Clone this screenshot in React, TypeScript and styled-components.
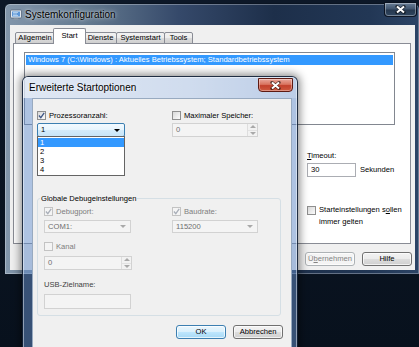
import React from 'react';
import styled, { createGlobalStyle } from 'styled-components';

const GlobalStyle = createGlobalStyle`
  html, body {
    margin: 0;
    padding: 0;
    background: #0b1522;
  }
  body {
    font-family: 'Liberation Sans', Arial, sans-serif;
  }
`;

const Desktop = styled.div`
  position: relative;
  width: 419px;
  height: 347px;
  overflow: hidden;
  background: linear-gradient(180deg, #0d1828 0%, #08111d 100%);
  font-size: 7.6px;
  line-height: 1;
  color: #000;
`;

/* ---------- window chrome ---------- */

const MainWindow = styled.div`
  position: absolute;
  left: 4px;
  top: 3px;
  width: 416px;
  height: 272px;
  box-sizing: border-box;
  display: flex;
  flex-direction: column;
  border: 1px solid #0a1422;
  border-radius: 6px 6px 0 0;
  background: linear-gradient(
    90deg,
    #8296ab 0%,
    #63798f 20%,
    #35496a 42%,
    #1d2f4a 65%,
    #223755 88%,
    #2c4466 100%
  );
  box-shadow: inset 0 0 0 1px rgba(255, 255, 255, 0.3);
`;

const Dialog = styled.div`
  position: absolute;
  left: 22px;
  top: 76px;
  width: 276px;
  height: 290px;
  box-sizing: border-box;
  display: flex;
  flex-direction: column;
  border: 1px solid rgba(8, 20, 40, 0.85);
  border-radius: 6px 6px 0 0;
  background: rgba(100, 140, 200, 0.52);
  box-shadow: 0 0 9px 2px rgba(0, 0, 0, 0.45),
    inset 0 0 0 1px rgba(255, 255, 255, 0.45);
`;

const TitleBar = styled.div<{ $glass?: boolean }>`
  position: relative;
  flex: none;
  height: 21px;
  display: flex;
  align-items: center;
  gap: 3px;
  padding-left: ${({ $glass }) => ($glass ? '6px' : '5px')};
  border-radius: 5px 5px 0 0;
  background: ${({ $glass }) =>
    $glass
      ? 'linear-gradient(90deg, rgba(255,255,255,0.62) 0%, rgba(255,255,255,0.42) 60%, rgba(255,255,255,0.18) 100%)'
      : 'none'};
`;

const TitleText = styled.span<{ $size: number }>`
  font-size: ${({ $size }) => $size}px;
  color: #000;
  text-shadow: 0 0 5px rgba(255, 255, 255, 0.75), 0 0 2px rgba(255, 255, 255, 0.5);
  white-space: nowrap;
`;

const CloseButton = styled.div<{ $red?: boolean }>`
  position: absolute;
  top: ${({ $red }) => ($red ? '1px' : '-2px')};
  right: ${({ $red }) => ($red ? '4px' : '2px')};
  width: ${({ $red }) => ($red ? '35px' : '33px')};
  height: ${({ $red }) => ($red ? '14px' : '15px')};
  box-sizing: border-box;
  display: flex;
  align-items: center;
  justify-content: center;
  border-radius: 0 0 4px 4px;
  border: 1px solid ${({ $red }) => ($red ? '#5e1a12' : 'rgba(5, 12, 25, 0.9)')};
  background: ${({ $red }) =>
    $red
      ? 'linear-gradient(180deg, #e9a79c 0%, #d9735f 45%, #c2402c 55%, #cf5a40 100%)'
      : 'linear-gradient(180deg, #6a7f98 0%, #40556f 45%, #26384f 55%, #304660 100%)'};
  box-shadow: inset 0 0 0 1px rgba(255, 255, 255, 0.35);
`;

const CloseGlyph = () => (
  <svg width="11" height="9" viewBox="0 0 11 9">
    <path
      d="M2 1.5 L9 7.5 M9 1.5 L2 7.5"
      stroke="rgba(0,0,0,0.55)"
      strokeWidth="3.4"
      strokeLinecap="round"
      fill="none"
    />
    <path d="M2 1.5 L9 7.5 M9 1.5 L2 7.5" stroke="#fff" strokeWidth="2" fill="none" />
  </svg>
);

const AppIcon = () => (
  <svg width="12" height="12" viewBox="0 0 12 12">
    <rect x="0.5" y="1" width="11" height="8" rx="1" fill="#e3e9f0" stroke="#56657a" strokeWidth="0.8" />
    <rect x="2" y="2.5" width="8" height="5" fill="#5d97d8" />
    <path d="M3 3.5h5M3 5h4M3 6.5h5" stroke="#e8f2fc" strokeWidth="0.6" />
    <path d="M4 9.3h4l.8 1.8H3.2z" fill="#8a97a6" />
  </svg>
);

/* ---------- main window content ---------- */

const MainClient = styled.div`
  flex: 1;
  margin: 0 4px 4px 5px;
  display: flex;
  flex-direction: column;
  background: #f0f0f0;
`;

const TabStrip = styled.div`
  display: flex;
  align-items: flex-end;
  height: 15px;
  margin-top: 4px;
  padding-left: 5px;
`;

const Tab = styled.div<{ $width: number; $active?: boolean }>`
  position: relative;
  z-index: ${({ $active }) => ($active ? 1 : 0)};
  width: ${({ $width }) => $width}px;
  height: ${({ $active }) => ($active ? '16px' : '12px')};
  margin: ${({ $active }) => ($active ? '0 -2px 0 -1px' : '0 -1px 0 0')};
  box-sizing: border-box;
  display: flex;
  align-items: center;
  justify-content: center;
  padding-bottom: ${({ $active }) => ($active ? '2px' : '0')};
  border: 1px solid #898c95;
  border-bottom: ${({ $active }) => ($active ? 'none' : '1px solid #898c95')};
  border-radius: 2px 2px 0 0;
  background: ${({ $active }) =>
    $active ? '#ffffff' : 'linear-gradient(180deg, #f2f2f2 0%, #ebebeb 50%, #dddddd 51%, #cfcfcf 100%)'};
  white-space: nowrap;
`;

const TabPanel = styled.div`
  height: 201px;
  box-sizing: border-box;
  margin: -1px 4px 0 3px;
  padding: 8px 0 0 10px;
  border: 1px solid #898c95;
  background: #ffffff;
`;

const ListBox = styled.div`
  width: 371px;
  height: 73px;
  box-sizing: border-box;
  padding: 2px 1px;
  border: 1px solid #828790;
  background: #ffffff;
`;

const ListRow = styled.div<{ $selected?: boolean }>`
  height: 10px;
  line-height: 10px;
  padding-left: 2px;
  white-space: nowrap;
  color: ${({ $selected }) => ($selected ? '#ffffff' : '#000000')};
  background: ${({ $selected }) => ($selected ? '#3399ff' : 'transparent')};
`;

const PanelLower = styled.div`
  display: grid;
  grid-template-columns: 283px auto;
  margin-top: 26px;
`;

const SideColumn = styled.div`
  display: flex;
  flex-direction: column;
`;

const FieldLabel = styled.div<{ $muted?: boolean }>`
  height: 9px;
  line-height: 9px;
  color: ${({ $muted }) => ($muted ? '#404040' : '#000')};
  white-space: nowrap;
`;

const InlineRow = styled.div<{ $top: number }>`
  display: flex;
  align-items: center;
  gap: 4px;
  margin-top: ${({ $top }) => $top}px;
`;

const WrapCheck = styled.div`
  display: flex;
  align-items: flex-start;
  gap: 3px;
  margin-top: 29px;
`;

const WrapText = styled.div`
  line-height: 12px;
  margin-top: -2px;
`;

const ButtonRow = styled.div<{ $top: number; $right: number }>`
  display: flex;
  justify-content: flex-end;
  gap: 7px;
  margin-top: ${({ $top }) => $top}px;
  padding-right: ${({ $right }) => $right}px;
`;

const Button = styled.div<{ $kind?: 'default' | 'disabled' }>`
  width: 50px;
  height: 14px;
  box-sizing: border-box;
  display: flex;
  align-items: center;
  justify-content: center;
  border-radius: 3px;
  border: 1px solid
    ${({ $kind }) => ($kind === 'default' ? '#3c7fb1' : $kind === 'disabled' ? '#adb2b5' : '#707070')};
  color: ${({ $kind }) => ($kind === 'disabled' ? '#838383' : '#000')};
  background: ${({ $kind }) =>
    $kind === 'default'
      ? 'linear-gradient(180deg, #eaf6fd 0%, #d9f0fc 50%, #bee6fd 51%, #a7d9f5 100%)'
      : $kind === 'disabled'
      ? '#f4f4f4'
      : 'linear-gradient(180deg, #f2f2f2 0%, #ebebeb 50%, #dddddd 51%, #cfcfcf 100%)'};
  box-shadow: inset 0 0 0 1px rgba(255, 255, 255, 0.7);
`;

/* ---------- form controls ---------- */

const CheckLabel = styled.div<{ $disabled?: boolean }>`
  display: flex;
  align-items: center;
  gap: 3px;
  height: 9px;
  white-space: nowrap;
  color: ${({ $disabled }) => ($disabled ? '#7d7d7d' : '#000')};
`;

const Box = styled.span<{ $disabled?: boolean }>`
  flex: none;
  width: 9px;
  height: 9px;
  box-sizing: border-box;
  display: inline-flex;
  align-items: center;
  justify-content: center;
  border: 1px solid ${({ $disabled }) => ($disabled ? '#c3c3c3' : '#8f8f8f')};
  background: ${({ $disabled }) =>
    $disabled ? '#f4f4f4' : 'linear-gradient(135deg, #d8d8d8 0%, #fbfbfb 100%)'};
`;

const CheckBox = ({ checked, disabled }: { checked?: boolean; disabled?: boolean }) => (
  <Box $disabled={disabled}>
    {checked && (
      <svg width="7" height="7" viewBox="0 0 7 7">
        <path
          d="M0.9 3.5 L2.8 5.6 L6.2 0.9"
          fill="none"
          stroke={disabled ? '#a8aeb8' : '#3d5585'}
          strokeWidth="1.3"
        />
      </svg>
    )}
  </Box>
);

const Field = styled.div<{ $w: number; $h: number; $disabled?: boolean; $hot?: boolean }>`
  position: relative;
  width: ${({ $w }) => $w}px;
  height: ${({ $h }) => $h}px;
  box-sizing: border-box;
  display: flex;
  align-items: center;
  padding-left: 3px;
  border: 1px solid
    ${({ $disabled, $hot }) => ($hot ? '#3c7fb1' : $disabled ? '#d2d2d2' : '#abadb3')};
  border-radius: ${({ $hot }) => ($hot ? '2px' : '0')};
  color: ${({ $disabled }) => ($disabled ? '#6d6d6d' : '#000')};
  background: ${({ $disabled, $hot }) =>
    $hot
      ? 'linear-gradient(180deg, #f3faff 0%, #e6f4fd 50%, #d4ecfb 51%, #c8e5f8 100%)'
      : $disabled
      ? '#f4f4f4'
      : '#ffffff'};
`;

const Arrow = styled.span<{ $disabled?: boolean; $up?: boolean }>`
  width: 0;
  height: 0;
  border-left: 3px solid transparent;
  border-right: 3px solid transparent;
  border-top: ${({ $up, $disabled }) => ($up ? 'none' : `3px solid ${$disabled ? '#a9a9a9' : '#000'}`)};
  border-bottom: ${({ $up, $disabled }) => ($up ? `3px solid ${$disabled ? '#a9a9a9' : '#000'}` : 'none')};
`;

const ComboArrow = styled.span`
  margin-left: auto;
  margin-right: 4px;
  display: flex;
`;

const SpinButtons = styled.span`
  margin-left: auto;
  width: 10px;
  height: 100%;
  box-sizing: border-box;
  display: flex;
  flex-direction: column;
  border-left: 1px solid #dedede;
`;

const SpinHalf = styled.span`
  flex: 1;
  display: flex;
  align-items: center;
  justify-content: center;
  background: #f2f2f2;
  & + & {
    border-top: 1px solid #e2e2e2;
  }
`;

const DropList = styled.div`
  position: absolute;
  left: -1px;
  top: 100%;
  width: 88px;
  box-sizing: border-box;
  padding: 1px 0;
  border: 1px solid #646464;
  background: #ffffff;
  z-index: 2;
`;

const DropItem = styled.div<{ $selected?: boolean }>`
  height: 9px;
  line-height: 9px;
  padding-left: 2px;
  color: ${({ $selected }) => ($selected ? '#fff' : '#000')};
  background: ${({ $selected }) => ($selected ? '#3399ff' : 'transparent')};
`;

const Spinner = ({ w, h, value }: { w: number; h: number; value: string }) => (
  <Field $w={w} $h={h} $disabled>
    {value}
    <SpinButtons>
      <SpinHalf>
        <Arrow $up $disabled />
      </SpinHalf>
      <SpinHalf>
        <Arrow $disabled />
      </SpinHalf>
    </SpinButtons>
  </Field>
);

/* ---------- dialog content ---------- */

const DialogClient = styled.div`
  flex: 1;
  position: relative;
  margin: 0 5px 0 9px;
  padding: 12px 0 0 4px;
  border: 1px solid #98aac0;
  border-bottom: none;
  background: #f0f0f0;
`;

const TopGrid = styled.div`
  display: grid;
  grid-template-columns: 135px 86px;
  grid-template-rows: 9px 14px;
  row-gap: 3px;
`;

const GroupBox = styled.fieldset`
  width: 244px;
  box-sizing: border-box;
  margin: 57px 0 0 0;
  padding: 4px 6px 6px 6px;
  min-width: 0;
  border: 1px solid #d5dfe5;
  border-radius: 3px;
`;

const GroupLegend = styled.legend`
  margin-left: -4px;
  padding: 0 1px;
  height: 9px;
  line-height: 9px;
`;

const GroupGrid = styled.div`
  display: grid;
  grid-template-columns: 128px 86px;
  grid-template-rows: 9px 13px;
  row-gap: 4px;
`;

const Stack = styled.div<{ $top: number }>`
  margin-top: ${({ $top }) => $top}px;
`;

export default function App() {
  return (
    <>
      <GlobalStyle />
      <Desktop>
        <MainWindow>
          <TitleBar>
            <AppIcon />
            <TitleText $size={10}>Systemkonfiguration</TitleText>
            <CloseButton>
              <CloseGlyph />
            </CloseButton>
          </TitleBar>
          <MainClient>
            <TabStrip>
              <Tab $width={40}>Allgemein</Tab>
              <Tab $width={33} $active>
                Start
              </Tab>
              <Tab $width={33}>Dienste</Tab>
              <Tab $width={49}>Systemstart</Tab>
              <Tab $width={29}>Tools</Tab>
            </TabStrip>
            <TabPanel>
              <ListBox>
                <ListRow $selected>
                  Windows 7 (C:\Windows) : Aktuelles Betriebssystem; Standardbetriebssystem
                </ListRow>
              </ListBox>
              <PanelLower>
                <div />
                <SideColumn>
                  <FieldLabel>
                    <u>T</u>imeout:
                  </FieldLabel>
                  <InlineRow $top={3}>
                    <Field $w={49} $h={14}>
                      30
                    </Field>
                    Sekunden
                  </InlineRow>
                  <WrapCheck>
                    <CheckBox />
                    <WrapText>
                      Starteinstellungen s<u>o</u>llen
                      <br />
                      immer gelten
                    </WrapText>
                  </WrapCheck>
                </SideColumn>
              </PanelLower>
            </TabPanel>
            <ButtonRow $top={8} $right={3}>
              <Button $kind="disabled">
                Ü<u>b</u>ernehmen
              </Button>
              <Button>Hilfe</Button>
            </ButtonRow>
          </MainClient>
        </MainWindow>

        <Dialog>
          <TitleBar $glass>
            <TitleText $size={10}>Erweiterte Startoptionen</TitleText>
            <CloseButton $red>
              <CloseGlyph />
            </CloseButton>
          </TitleBar>
          <DialogClient>
            <TopGrid>
              <CheckLabel>
                <CheckBox checked />
                Prozessoranzahl:
              </CheckLabel>
              <CheckLabel>
                <CheckBox />
                Maximaler Speicher:
              </CheckLabel>
              <Field $w={88} $h={14} $hot>
                1
                <ComboArrow>
                  <Arrow />
                </ComboArrow>
                <DropList>
                  <DropItem $selected>1</DropItem>
                  <DropItem>2</DropItem>
                  <DropItem>3</DropItem>
                  <DropItem>4</DropItem>
                </DropList>
              </Field>
              <Spinner w={86} h={14} value="0" />
            </TopGrid>

            <GroupBox>
              <GroupLegend>Globale Debugeinstellungen</GroupLegend>
              <GroupGrid>
                <CheckLabel $disabled>
                  <CheckBox checked disabled />
                  Debugport:
                </CheckLabel>
                <CheckLabel $disabled>
                  <CheckBox checked disabled />
                  Baudrate:
                </CheckLabel>
                <Field $w={87} $h={13} $disabled>
                  COM1:
                  <ComboArrow>
                    <Arrow $disabled />
                  </ComboArrow>
                </Field>
                <Field $w={86} $h={13} $disabled>
                  115200
                  <ComboArrow>
                    <Arrow $disabled />
                  </ComboArrow>
                </Field>
              </GroupGrid>
              <Stack $top={9}>
                <CheckLabel $disabled>
                  <CheckBox disabled />
                  Kanal
                </CheckLabel>
              </Stack>
              <Stack $top={5}>
                <Spinner w={88} h={14} value="0" />
              </Stack>
              <Stack $top={10}>
                <FieldLabel $muted>USB-Zielname:</FieldLabel>
              </Stack>
              <Stack $top={5}>
                <Field $w={87} $h={15} $disabled />
              </Stack>
            </GroupBox>

            <ButtonRow $top={9} $right={8}>
              <Button $kind="default">OK</Button>
              <Button>Abbrechen</Button>
            </ButtonRow>
          </DialogClient>
        </Dialog>
      </Desktop>
    </>
  );
}
